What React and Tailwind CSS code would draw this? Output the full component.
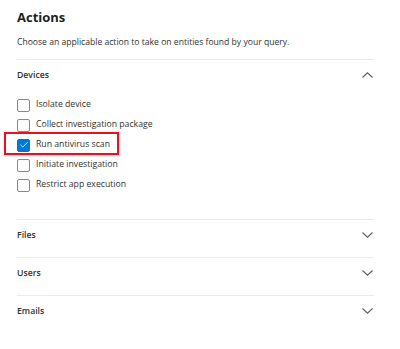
import { Check } from "lucide-react";

const font = { fontFamily: '"Open Sans", "Noto Sans", sans-serif' };

const Chevron = ({ up }) => (
  <svg width="11" height="6" viewBox="0 0 11 6" fill="none" className="text-[#605e5c] mt-[4px]">
    <path
      d={up ? "M0.5 5.5 L5.5 0.8 L10.5 5.5" : "M0.5 0.5 L5.5 5.2 L10.5 0.5"}
      stroke="currentColor"
      strokeWidth="1.1"
    />
  </svg>
);

const Option = ({ label, checked }) => (
  <div className="flex items-center gap-[6px] h-[20px]">
    <div
      className={`w-[13px] h-[13px] rounded-[2px] flex items-center justify-center ${
        checked ? "bg-[#0078d4] border border-[#0078d4]" : "border border-[#8a8886] bg-white"
      }`}
    >
      {checked && <Check size={10} strokeWidth={2} className="text-white" />}
    </div>
    <span className="text-[8.7px] text-[#323130]">{label}</span>
  </div>
);

const Section = ({ title }) => (
  <div className="h-[38px] border-t border-[#edebe9] flex items-start justify-between pt-[8px] pr-[1px]">
    <span className="text-[8.7px] leading-[14px] font-semibold text-[#323130]">{title}</span>
    <Chevron />
  </div>
);

export default function App() {
  return (
    <div className="w-[400px] h-[349px] bg-white pl-[17px] pr-[26px] pt-[5px]" style={font}>
      <h1 className="text-[13px] font-bold text-[#201f1e] leading-[24px]">Actions</h1>
      <p className="text-[8.6px] text-[#323130] mt-[6px] leading-[14px]">
        Choose an applicable action to take on entities found by your query.
      </p>

      <div className="mt-[10px] border-t border-[#edebe9]">
        <div className="h-[29px] flex items-start justify-between pt-[8px] pr-[1px]">
          <span className="text-[8.7px] leading-[14px] font-semibold text-[#323130]">Devices</span>
          <Chevron up />
        </div>
        <div className="flex flex-col mt-[6px]">
          <Option label="Isolate device" />
          <Option label="Collect investigation package" />
          <div className="relative">
            <Option label="Run antivirus scan" checked />
            <div className="absolute left-[-13px] top-[-3px] w-[115px] h-[23px] border-2 border-[#e81123] shadow-[1px_1px_2px_rgba(0,0,0,0.25)]" />
          </div>
          <Option label="Initiate investigation" />
          <Option label="Restrict app execution" />
        </div>
        <div className="h-[24px]" />
      </div>

      <Section title="Files" />
      <Section title="Users" />
      <Section title="Emails" />
    </div>
  );
}
